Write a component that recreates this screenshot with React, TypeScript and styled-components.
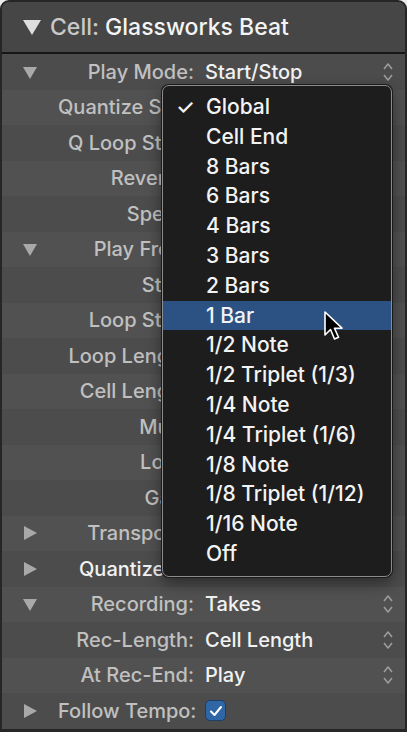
import React from 'react';
import styled, { createGlobalStyle } from 'styled-components';

const GlobalStyle = createGlobalStyle`
  html, body {
    margin: 0;
    padding: 0;
    background: #ececec;
  }
  body {
    font-family: Inter, 'Liberation Sans', sans-serif;
  }
`;

const Panel = styled.div`
  position: relative;
  width: 407px;
  height: 732px;
  box-sizing: border-box;
  border: 2px solid #262626;
  border-bottom-width: 3px;
  border-radius: 9px 9px 0 0;
  background: #4e4e4e;
  overflow: hidden;
`;

const Header = styled.div`
  display: flex;
  align-items: center;
  gap: 8px;
  height: 50px;
  padding-left: 20px;
  background: #464646;
  border-bottom: 2px solid #161616;
  font-size: 23px;
  font-weight: 500;
`;

const HeaderKey = styled.span`
  color: #c9c9c9;
`;

const HeaderValue = styled.span`
  color: #f4f4f4;
`;

const Row = styled.div<{ $alt: boolean }>`
  display: grid;
  grid-template-columns: 56px 136px 1fr 34px;
  align-items: center;
  height: 35.5px;
  background: ${p => (p.$alt ? '#515151' : '#4c4c4c')};
  font-size: 20px;
  font-weight: 500;
`;

const TriangleCell = styled.div`
  display: flex;
  justify-content: center;
  align-items: center;
`;

const Label = styled.div<{ $section?: boolean }>`
  color: ${p => (p.$section ? '#f2f2f2' : '#c0c0c0')};
  text-align: ${p => (p.$section ? 'left' : 'right')};
  padding-left: ${p => (p.$section ? '21px' : '0')};
  white-space: nowrap;
  overflow: visible;
`;

const Value = styled.div`
  color: #f2f2f2;
  padding-left: 11px;
  white-space: nowrap;
  display: flex;
  align-items: center;
`;

const StepperCell = styled.div`
  display: flex;
  justify-content: center;
  align-items: center;
`;

const Check = styled.span`
  display: flex;
  align-items: center;
  justify-content: center;
  width: 21px;
  height: 21px;
  box-sizing: border-box;
  border-radius: 5px;
  background: #2f67a6;
  border: 1px solid #1f3e63;
`;

const Menu = styled.div`
  position: absolute;
  left: 160px;
  top: 83px;
  width: 230px;
  box-sizing: border-box;
  padding: 6px 0 7px;
  background: #1d1d1d;
  border: 1px solid #8c8c8c;
  border-radius: 7px;
  box-shadow: 0 0 0 1px #1a1a1a, 0 6px 16px rgba(0, 0, 0, 0.45);
`;

const MenuItem = styled.div<{ $active?: boolean }>`
  position: relative;
  height: 29.8px;
  line-height: 29.8px;
  padding-left: 43px;
  font-size: 21px;
  font-weight: 500;
  color: #f3f3f3;
  background: ${p => (p.$active ? '#2b5282' : 'transparent')};
  white-space: nowrap;
`;

const CheckMark = styled.span`
  position: absolute;
  left: 13px;
  top: 0;
  font-size: 21px;
  color: #f3f3f3;
`;

const Cursor = styled.svg`
  position: absolute;
  left: 322px;
  top: 309px;
`;

const Triangle = ({ open }: { open: boolean }) => (
  <svg width="16" height="16" viewBox="0 0 16 16">
    {open ? (
      <polygon points="1,3 15,3 8,15" fill="#a9a9a9" />
    ) : (
      <polygon points="2,1 15,8 2,15" fill="#a9a9a9" />
    )}
  </svg>
);

const Stepper = () => (
  <svg width="12" height="22" viewBox="0 0 12 22">
    <polyline points="2,8 6,3 10,8" fill="none" stroke="#9c9c9c" strokeWidth="1.6" strokeLinejoin="round" />
    <polyline points="2,14 6,19 10,14" fill="none" stroke="#9c9c9c" strokeWidth="1.6" strokeLinejoin="round" />
  </svg>
);

type RowData = {
  label: string;
  value?: string;
  tri?: 'open' | 'closed';
  stepper?: boolean;
  section?: boolean;
  checkbox?: boolean;
};

const rows: RowData[] = [
  { label: 'Play Mode:', value: 'Start/Stop', tri: 'open', stepper: true },
  { label: 'Quantize Start:', value: 'Global', stepper: true },
  { label: 'Q Loop Start:', value: 'Off', stepper: true },
  { label: 'Reverse:', value: '' },
  { label: 'Speed:', value: '1x', stepper: true },
  { label: 'Play From:', value: 'Start', tri: 'open', stepper: true },
  { label: 'Start:', value: '1 1 1 1' },
  { label: 'Loop Start:', value: '1 1 1 1' },
  { label: 'Loop Length:', value: '4 0 0 0' },
  { label: 'Cell Length:', value: '4 0 0 0' },
  { label: 'Mute:', value: '' },
  { label: 'Loop:', value: '' },
  { label: 'Gain:', value: '0.0 dB' },
  { label: 'Transpose:', value: '0', tri: 'closed' },
  { label: 'Quantize', tri: 'closed', section: true },
  { label: 'Recording:', value: 'Takes', tri: 'open', stepper: true },
  { label: 'Rec-Length:', value: 'Cell Length', stepper: true },
  { label: 'At Rec-End:', value: 'Play', stepper: true },
  { label: 'Follow Tempo:', tri: 'closed', checkbox: true },
];

const menuItems = [
  'Global',
  'Cell End',
  '8 Bars',
  '6 Bars',
  '4 Bars',
  '3 Bars',
  '2 Bars',
  '1 Bar',
  '1/2 Note',
  '1/2 Triplet (1/3)',
  '1/4 Note',
  '1/4 Triplet (1/6)',
  '1/8 Note',
  '1/8 Triplet (1/12)',
  '1/16 Note',
  'Off',
];

const App: React.FC = () => {
  return (
    <>
      <GlobalStyle />
      <Panel>
        <Header>
          <svg width="20" height="18" viewBox="0 0 20 18">
            <polygon points="1,2 19,2 10,17" fill="#dedede" />
          </svg>
          <span>
            <HeaderKey>Cell: </HeaderKey>
            <HeaderValue>Glassworks Beat</HeaderValue>
          </span>
        </Header>

        {rows.map((r, i) => (
          <Row key={r.label} $alt={i % 2 === 1}>
            <TriangleCell>{r.tri && <Triangle open={r.tri === 'open'} />}</TriangleCell>
            <Label $section={r.section}>{r.label}</Label>
            <Value>
              {r.checkbox ? (
                <Check>
                  <svg width="14" height="12" viewBox="0 0 14 12">
                    <polyline points="2,6.5 5.5,10 12,2" fill="none" stroke="#fff" strokeWidth="2" strokeLinecap="round" strokeLinejoin="round" />
                  </svg>
                </Check>
              ) : (
                r.value
              )}
            </Value>
            <StepperCell>{r.stepper && <Stepper />}</StepperCell>
          </Row>
        ))}

        <Menu>
          {menuItems.map(item => (
            <MenuItem key={item} $active={item === '1 Bar'}>
              {item === 'Global' && <CheckMark>✓</CheckMark>}
              {item}
            </MenuItem>
          ))}
        </Menu>

        <Cursor width="22" height="32" viewBox="0 0 22 32">
          <polygon
            points="1,1 1,24 6.5,18.5 10.5,28 14.5,26.3 10.5,17.2 18,17.2"
            fill="#000"
            stroke="#fff"
            strokeWidth="1.6"
            strokeLinejoin="round"
          />
        </Cursor>
      </Panel>
    </>
  );
};

export default App;
